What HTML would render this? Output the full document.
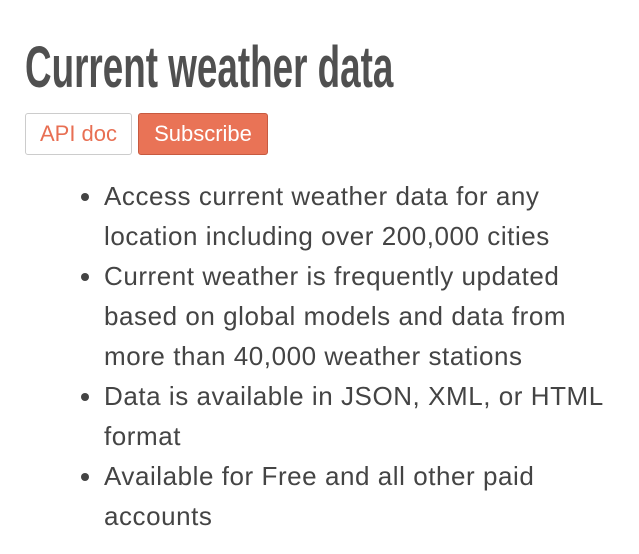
<!DOCTYPE html>
<html><head><style>
body{margin:0;background:#fff;font-family:"Liberation Sans",sans-serif;color:#48484a;}
.t{position:absolute;left:25px;top:38px;font-size:58px;font-weight:bold;color:#505050;white-space:nowrap;transform-origin:0 0;transform:scaleX(0.635);line-height:60px;}
.b{position:absolute;top:113px;height:42px;box-sizing:border-box;border-radius:3px;font-size:22px;line-height:40px;text-align:center}
.b1{left:25px;width:107px;border:1px solid #ccc;color:#e86f53;background:#fff}
.b2{left:138px;width:130px;border:1px solid #c75a40;color:#fff;background:#e97356}
ul{position:absolute;left:57px;top:176px;margin:0;padding:0 0 0 47px;width:505px;font-size:26px;letter-spacing:0.55px;line-height:40px;color:#444}
li{margin:0}
</style></head><body>
<div class="t">Current weather data</div>
<div class="b b1">API doc</div>
<div class="b b2">Subscribe</div>
<ul>
<li>Access current weather data for any location including over 200,000 cities</li>
<li>Current weather is frequently updated based on global models and data from more than 40,000 weather stations</li>
<li>Data is available in JSON, XML, or HTML format</li>
<li>Available for Free and all other paid accounts</li>
</ul>
</body></html>
